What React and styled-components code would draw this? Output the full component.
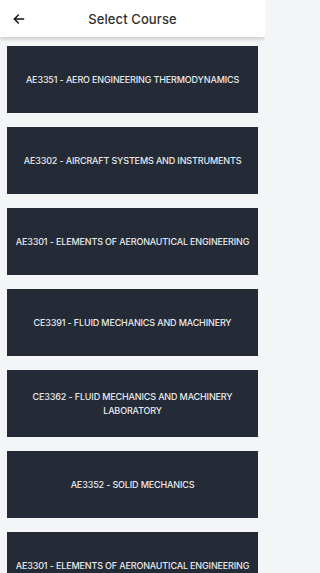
import React from 'react';
import styled, { createGlobalStyle } from 'styled-components';

const GlobalStyle = createGlobalStyle`
  html, body {
    margin: 0;
    padding: 0;
    background: #f4f5f6;
    font-family: 'Inter', 'Noto Sans', sans-serif;
  }
`;

const Page = styled.div`
  width: 265px;
  min-height: 573px;
  background: #f4f5f6;
  overflow: hidden;
`;

const Header = styled.header`
  height: 37px;
  display: flex;
  align-items: center;
  justify-content: center;
  position: relative;
  background: #ffffff;
  box-shadow: 0 2px 4px rgba(0, 0, 0, 0.18);
`;

const BackButton = styled.button`
  position: absolute;
  left: 9px;
  top: 9px;
  width: 20px;
  height: 20px;
  padding: 0;
  border: none;
  background: none;
  display: flex;
  align-items: center;
  justify-content: center;
  color: #111;
`;

const Title = styled.h1`
  margin: 0;
  font-size: 13px;
  font-weight: 500;
  color: #2e2e2e;
  letter-spacing: 0.1px;
`;

const List = styled.div`
  display: flex;
  flex-direction: column;
  gap: 14px;
  padding: 9px 7px 0;
`;

const Card = styled.div`
  height: 67px;
  background: #252b36;
  display: flex;
  align-items: center;
  justify-content: center;
  padding: 0 8px;
  box-sizing: border-box;
`;

const CardText = styled.span`
  color: #e8eaed;
  font-size: 9px;
  font-weight: 500;
  line-height: 14px;
  text-align: center;
  letter-spacing: -0.15px;
`;

const courses = [
  'AE3351 - AERO ENGINEERING THERMODYNAMICS',
  'AE3302 - AIRCRAFT SYSTEMS AND INSTRUMENTS',
  'AE3301 - ELEMENTS OF AERONAUTICAL ENGINEERING',
  'CE3391 - FLUID MECHANICS AND MACHINERY',
  'CE3362 - FLUID MECHANICS AND MACHINERY LABORATORY',
  'AE3352 - SOLID MECHANICS',
  'AE3301 - ELEMENTS OF AERONAUTICAL ENGINEERING',
];

const App = () => {
  return (
    <>
      <GlobalStyle />
      <Page>
        <Header>
          <BackButton>
            <svg width="14" height="14" viewBox="0 0 24 24" fill="none" stroke="currentColor" strokeWidth="2.4" strokeLinecap="round" strokeLinejoin="round">
              <path d="M20 12H4" />
              <path d="M11 5l-7 7 7 7" />
            </svg>
          </BackButton>
          <Title>Select Course</Title>
        </Header>
        <List>
          {courses.map((c, i) => (
            <Card key={i}>
              <CardText>{c}</CardText>
            </Card>
          ))}
        </List>
      </Page>
    </>
  );
};

export default App;
